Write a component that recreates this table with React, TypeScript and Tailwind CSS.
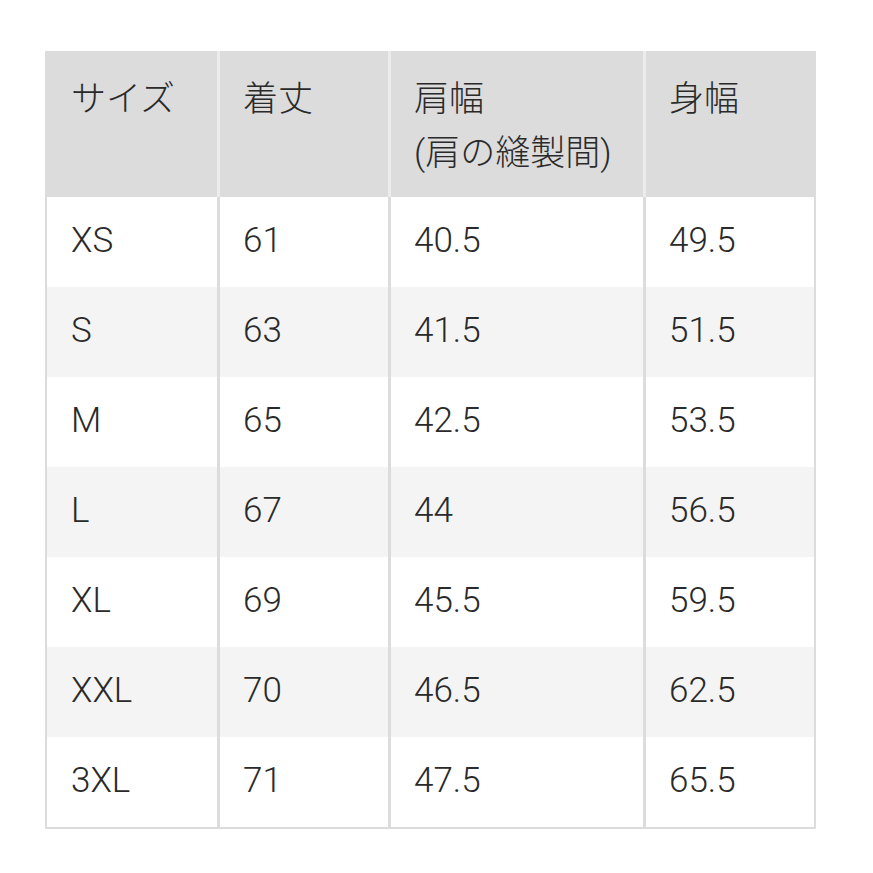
import React from "react";

const rows: [string, string, string, string][] = [
  ["XS", "61", "40.5", "49.5"],
  ["S", "63", "41.5", "51.5"],
  ["M", "65", "42.5", "53.5"],
  ["L", "67", "44", "56.5"],
  ["XL", "69", "45.5", "59.5"],
  ["XXL", "70", "46.5", "62.5"],
  ["3XL", "71", "47.5", "65.5"],
];

export default function App() {
  return (
    <div
      className="w-[873px] h-[873px] bg-white pt-[51px] pl-[45px] text-[#2a2a2a]"
      style={{ fontFamily: 'Roboto, "Noto Sans CJK JP", sans-serif' }}
    >
      <div className="w-[771px] flex flex-col text-[35px] font-light">
        <div className="flex h-[146px] bg-[#dcdcdc] leading-[54px]">
          <div className="w-[172px] pl-[26px] pt-[22px]">サイズ</div>
          <div className="w-[171px] border-l-[3px] border-[#ececec] pl-[23px] pt-[22px]">着丈</div>
          <div className="w-[255px] border-l-[3px] border-[#ececec] pl-[23px] pt-[22px]">
            肩幅
            <br />
            (肩の縫製間)
          </div>
          <div className="w-[173px] border-l-[3px] border-[#ececec] pl-[23px] pt-[22px]">身幅</div>
        </div>
        {rows.map((r, i) => (
          <div
            key={r[0]}
            className={
              "flex h-[90px] leading-none " + (i % 2 === 1 ? "bg-[#f4f4f4]" : "bg-white")
            }
          >
            <div className="w-[172px] border-l-2 border-[#dcdcdc] pl-[24px] pb-[4px] flex items-center">{r[0]}</div>
            <div className="w-[171px] border-l-[3px] border-[#dcdcdc] pl-[23px] pb-[4px] flex items-center">{r[1]}</div>
            <div className="w-[255px] border-l-[3px] border-[#dcdcdc] pl-[23px] pb-[4px] flex items-center">{r[2]}</div>
            <div className="w-[173px] border-l-[3px] border-r-2 border-[#dcdcdc] pl-[23px] pb-[4px] flex items-center">{r[3]}</div>
          </div>
        ))}
        <div className="h-[2px] bg-[#dcdcdc]" />
      </div>
    </div>
  );
}
